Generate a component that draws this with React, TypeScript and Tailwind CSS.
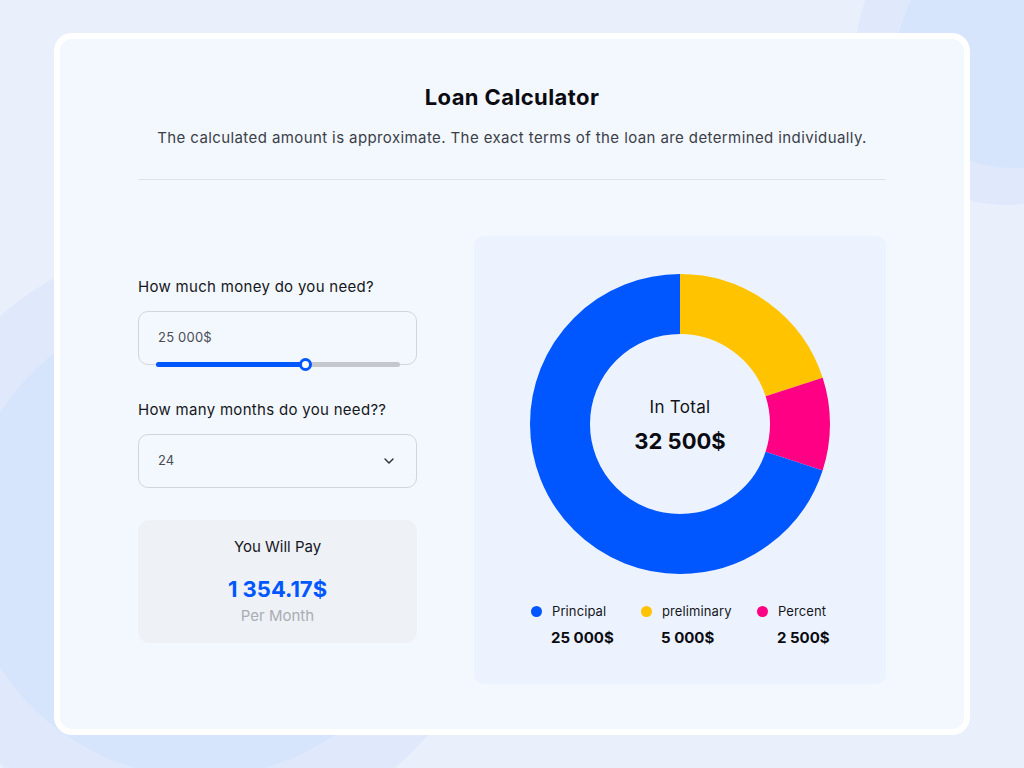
import { FC } from "react";

const segments = [
  { color: "#ffc300", part: 0.2 },
  { color: "#ff0084", part: 0.1 },
  { color: "#0057ff", part: 0.7 },
];

const legend = [
  { label: "Principal", value: "25 000$", color: "bg-[#0057ff]" },
  { label: "preliminary", value: "5 000$", color: "bg-[#ffc300]" },
  { label: "Percent", value: "2 500$", color: "bg-[#ff0084]" },
];

const Donut: FC = () => {
  const r = 120;
  const c = 2 * Math.PI * r;
  let offset = 0;
  return (
    <div className="relative w-[300px] h-[300px]">
      <svg width="300" height="300" viewBox="0 0 300 300" className="-rotate-90">
        {segments.map((s) => {
          const len = s.part * c;
          const el = (
            <circle
              key={s.color}
              cx="150"
              cy="150"
              r={r}
              fill="none"
              stroke={s.color}
              strokeWidth="60"
              strokeDasharray={`${len} ${c - len}`}
              strokeDashoffset={-offset}
            />
          );
          offset += len;
          return el;
        })}
      </svg>
      {/* CENTER LABEL */}
      <div className="absolute inset-0 flex flex-col items-center justify-center pt-[1px]">
        <span className="text-[17px] leading-6 tracking-[0.3px] text-[#111318]">In Total</span>
        <span className="mt-[8px] text-[22px] leading-7 font-bold text-[#0b0b12]">32 500$</span>
      </div>
    </div>
  );
};

const App: FC = () => {
  return (
    <div
      className="relative w-full h-[768px] overflow-hidden bg-[#e9f0fc] flex items-center justify-center"
      style={{ fontFamily: "Inter, 'Open Sans', sans-serif" }}
    >
      {/* BACKGROUND SHAPES */}
      <div className="absolute left-[-100px] top-[240px] w-[600px] h-[600px] rounded-full bg-[#e0e9fc]" />
      <div className="absolute left-[-37px] top-[303px] w-[474px] h-[474px] rounded-full bg-[#d6e4fc]" />
      <div className="absolute left-[855px] top-[-95px] w-[300px] h-[300px] rounded-full bg-[#e0e9fc]" />
      <div className="absolute left-[897px] top-[-58px] w-[226px] h-[226px] rounded-full bg-[#d6e4fc]" />

      {/* CARD */}
      <div className="relative w-[916px] h-[702px] rounded-[18px] border-[6px] border-white bg-[#f3f7fe] px-[78px] pt-[44px]">
        <h1 className="text-center text-[22px] leading-7 tracking-[0.4px] font-bold text-[#0b0b12]">Loan Calculator</h1>
        <p className="mt-[15px] text-center text-[15px] leading-6 tracking-[0.4px] text-[#3b3f48]">
          The calculated amount is approximate. The exact terms of the loan are determined individually.
        </p>
        <div className="mt-[29px] h-px bg-[#dfe3ea]" />

        <div className="mt-[56px] flex items-start gap-[57px]">
          {/* FORM */}
          <div className="mt-[41px] w-[279px] flex flex-col">
            <label className="text-[15px] leading-5 tracking-[0.3px] text-[#15171c]">How much money do you need?</label>
            <div className="relative mt-[14px] h-[54px] rounded-[10px] border border-[#d2d5db] pl-[19px] flex items-center">
              <span className="text-[13px] tracking-[0.2px] text-[#4a4d55]">25 000$</span>
              {/* SLIDER */}
              <div className="absolute left-[17px] right-[16px] bottom-[-3px] h-[5px] rounded-full bg-[#c4c7cc]">
                <div className="h-full w-[150px] rounded-full bg-[#0057ff]" />
                <div className="absolute left-[143px] top-[-4px] w-[13px] h-[13px] rounded-full border-[3px] border-[#0057ff] bg-white" />
              </div>
            </div>

            <label className="mt-[35px] text-[15px] leading-5 tracking-[0.3px] text-[#15171c]">How many months do you need??</label>
            <div className="mt-[14px] h-[54px] rounded-[10px] border border-[#d2d5db] pl-[19px] pr-[22px] flex items-center justify-between">
              <span className="text-[13px] text-[#4a4d55]">24</span>
              <svg width="10" height="6" viewBox="0 0 10 6" fill="none">
                <path d="M1 1l4 4 4-4" stroke="#2b2e35" strokeWidth="1.4" strokeLinecap="round" strokeLinejoin="round" />
              </svg>
            </div>

            <div className="mt-[32px] h-[123px] rounded-[12px] bg-[#eef1f6] flex flex-col items-center pt-[17px]">
              <span className="text-[15px] leading-5 text-[#15171c]">You Will Pay</span>
              <span className="mt-[18px] text-[22px] leading-7 font-bold text-[#0057ff]">1 354.17$</span>
              <span className="mt-[3px] text-[15px] leading-5 text-[#a9adb5]">Per Month</span>
            </div>
          </div>

          {/* CHART */}
          <div className="w-[412px] h-[448px] rounded-[10px] bg-[#edf3fe] flex flex-col items-center pt-[38px]">
            <Donut />
            <div className="mt-[27px] grid grid-cols-[110px_116px_80px] pl-[8px]">
              {legend.map((item) => (
                <div key={item.label} className="flex flex-col">
                  <div className="flex items-center gap-[10px]">
                    <span className={`w-[11px] h-[11px] rounded-full ${item.color}`} />
                    <span className="text-[13px] leading-5 tracking-[0.1px] text-[#15171c]">{item.label}</span>
                  </div>
                  <span className="mt-[7px] pl-[20px] whitespace-nowrap text-[15px] leading-5 font-bold text-[#0b0b12]">
                    {item.value}
                  </span>
                </div>
              ))}
            </div>
          </div>
        </div>
      </div>
    </div>
  );
};

export default App;
